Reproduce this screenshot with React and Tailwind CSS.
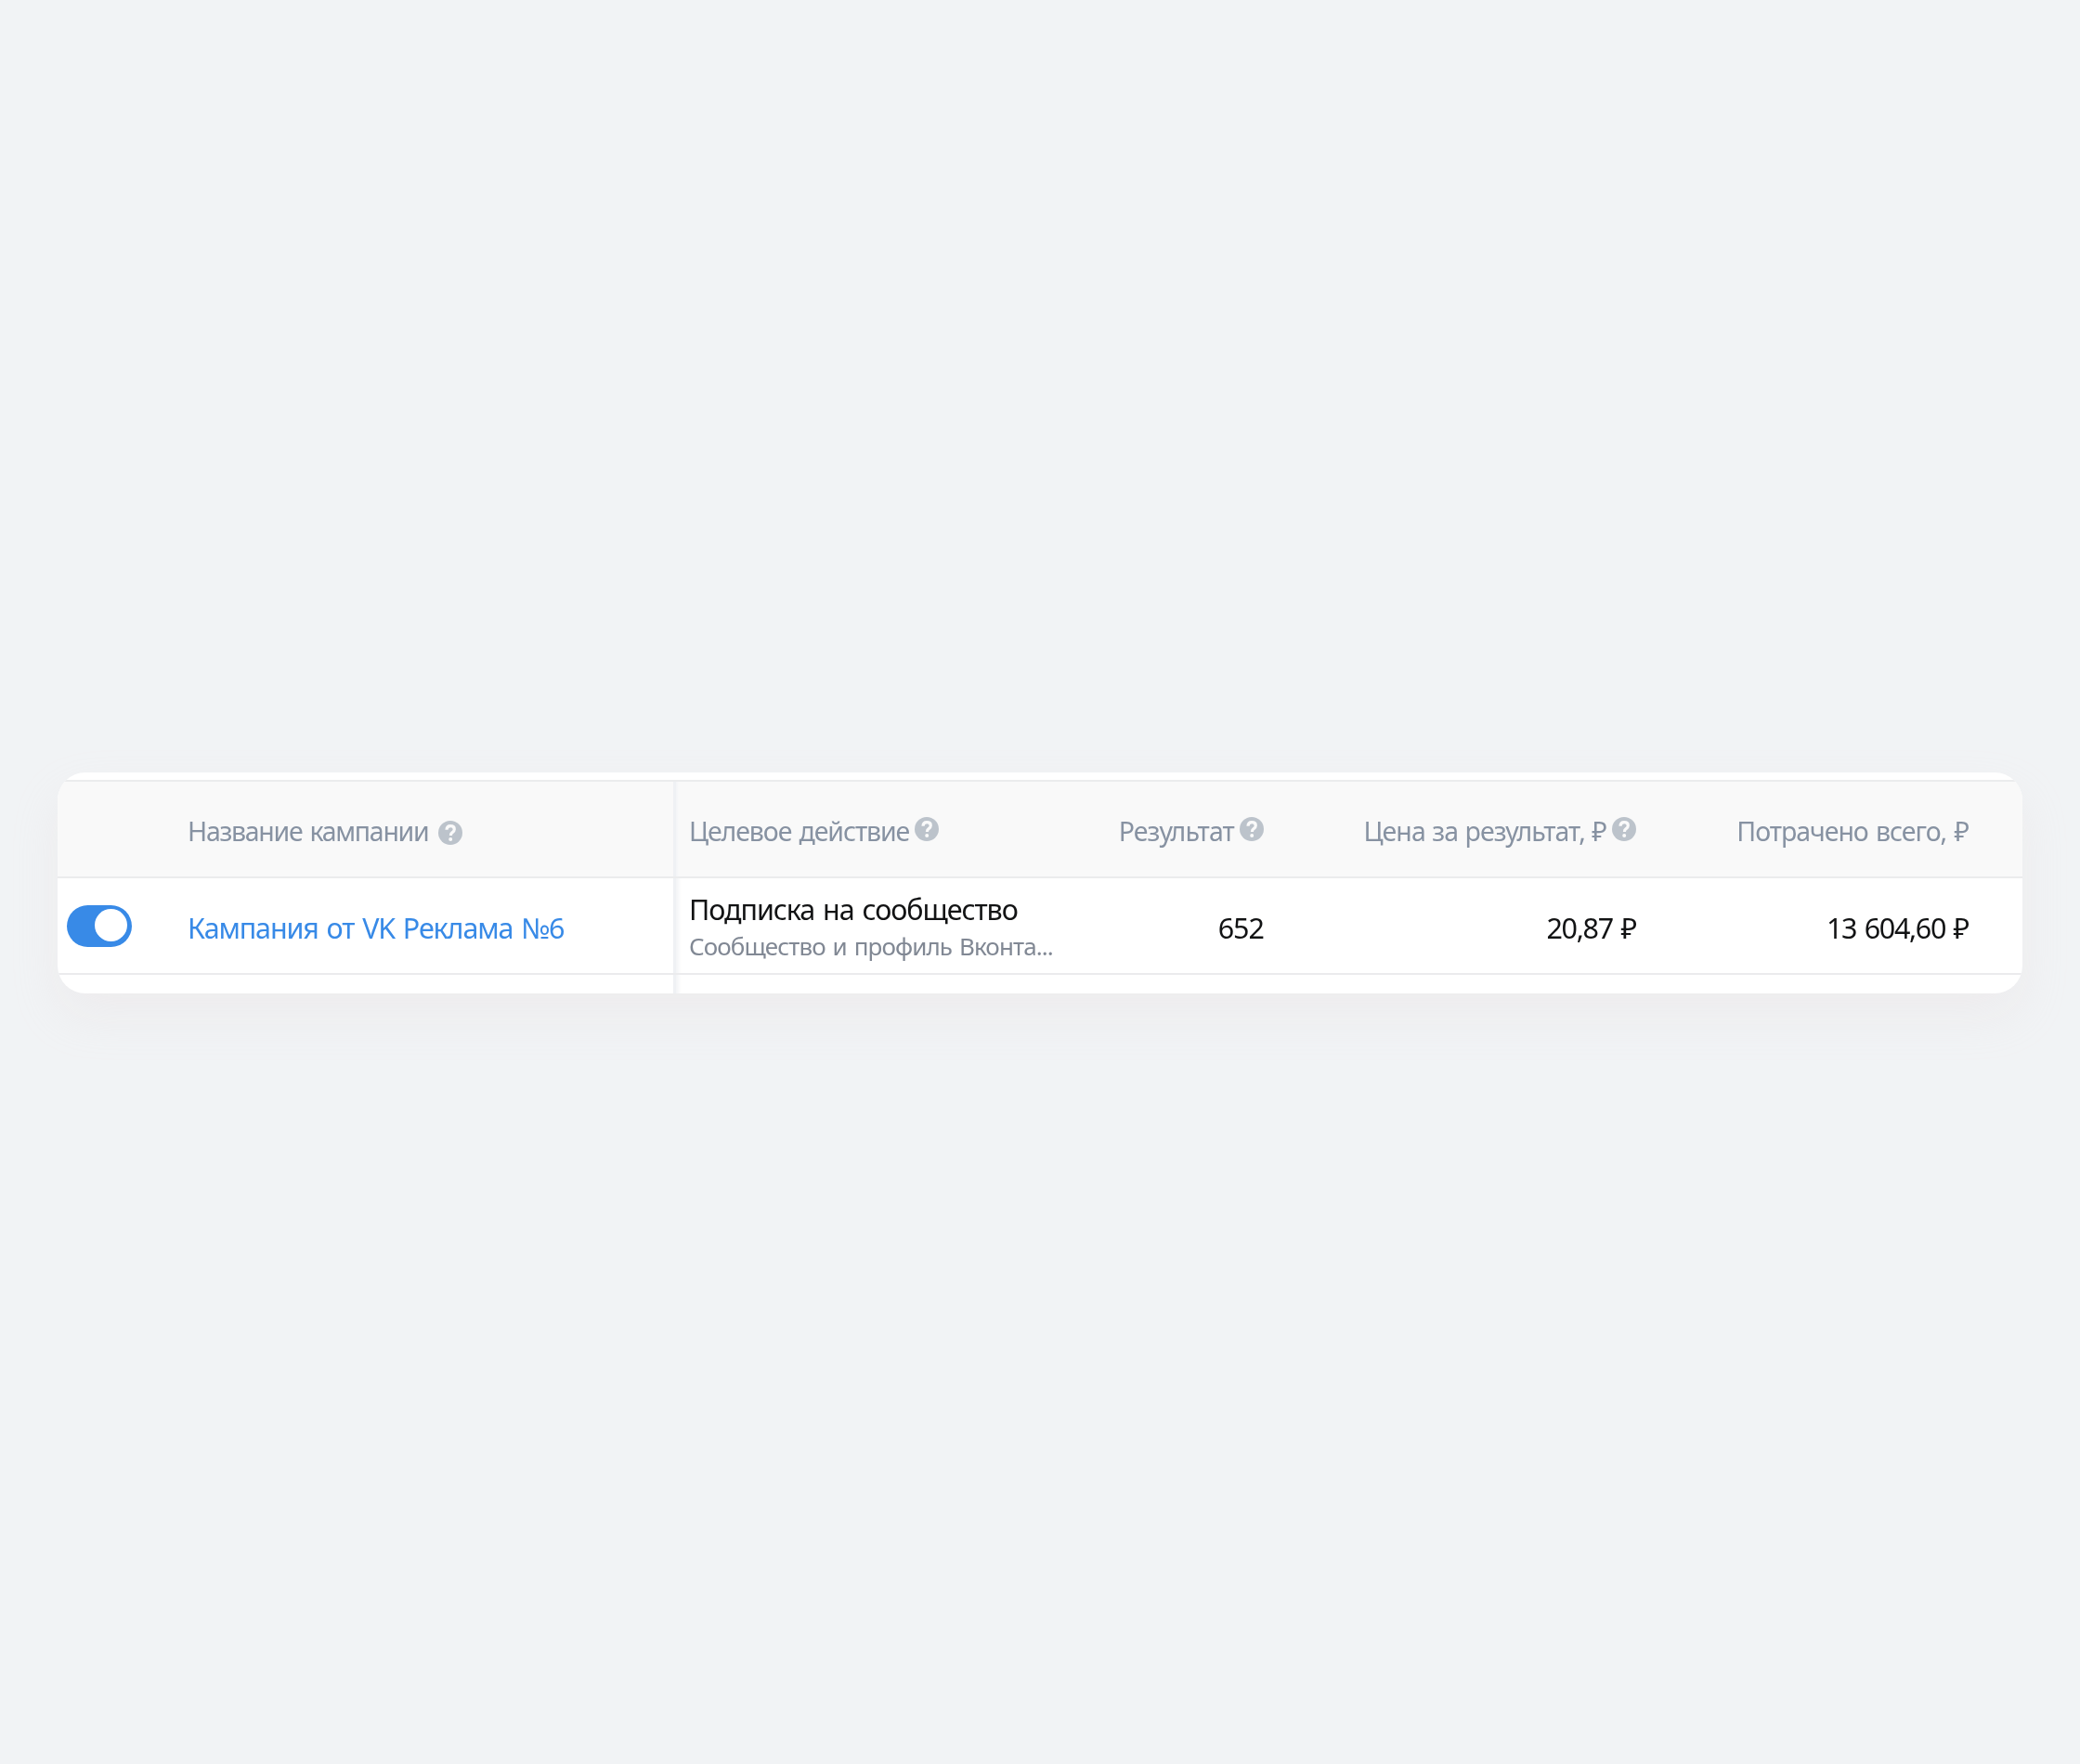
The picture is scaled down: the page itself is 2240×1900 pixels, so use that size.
import React from 'react';

const HelpIcon = ({ className = '' }) => (
  <svg viewBox="0 0 26 26" className={`size-[26px] shrink-0 ${className}`} fill="none">
    <circle cx="13" cy="13" r="13" fill="#bcc3cb" />
    <path
      d="M9 9.8C9.1 7.2 10.6 5.7 13.1 5.7c2.6 0 4.2 1.4 4.2 3.5 0 1.8-1 2.6-2.2 3.5-1.2.8-1.7 1.5-1.7 3.2"
      stroke="#fafafa"
      strokeWidth="3.2"
    />
    <circle cx="13.2" cy="20" r="2" fill="#fafafa" />
  </svg>
);

const Toggle = () => (
  <button
    type="button"
    role="switch"
    aria-checked="true"
    className="flex h-[45px] w-[70px] justify-end rounded-full bg-[#388ae7] pr-[5px] pt-1"
  >
    <span className="size-[35px] rounded-full bg-white" />
  </button>
);

const columns = 'grid grid-cols-[141px_522px_386px_250px_401px_358px_58px]';

const App = () => {
  return (
    <div className="flex h-[1900px] w-[2240px] items-start justify-center bg-[#f1f3f5] pt-[832px] font-['Noto_Sans',sans-serif] font-[370]">
      <div className="relative h-[238px] w-[2116px] overflow-hidden rounded-[30px] bg-white shadow-[0_24px_50px_rgba(225,208,208,0.2)]">
        <div className="h-2" />

        {/* Header */}
        <div className={`${columns} h-[106px] items-center whitespace-nowrap border-y-2 border-[#ebeced] bg-[#f9f9f9] text-[28.5px] text-[#8792a2]`}>
          <div />
          <div className="-ml-px flex items-center pt-1">
            <span className="tracking-[-1.3px] [word-spacing:2px]">Название кампании</span>
            <HelpIcon className="ml-[11px] mt-[3px]" />
          </div>
          <div className="flex items-center pl-[17px] pt-1">
            <span className="tracking-[-1.1px] [word-spacing:2px]">Целевое действие</span>
            <HelpIcon className="mb-[5px] ml-1.5" />
          </div>
          <div className="flex items-center justify-end pt-1">
            <span className="tracking-[-0.85px]">Результат</span>
            <HelpIcon className="mb-[5px] ml-1.5" />
          </div>
          <div className="flex items-center justify-end pt-1">
            <span className="tracking-[-0.95px] [word-spacing:1px]">Цена за результат, ₽</span>
            <HelpIcon className="mb-[5px] ml-1.5" />
          </div>
          <div className="pt-1 text-right tracking-[-1.05px] [word-spacing:2px]">Потрачено всего, ₽</div>
        </div>

        {/* Campaign row */}
        <div className={`${columns} h-[104px] items-center whitespace-nowrap border-b-2 border-[#ebebed] text-[30.5px] text-[#121314]`}>
          <div className="pl-2.5">
            <Toggle />
          </div>
          <a className="-ml-px pt-1.5 tracking-[-1.13px] text-[#388ae7] [word-spacing:2px]">Кампания от VK Реклама №6</a>
          <div className="flex flex-col pl-[17px] pt-1">
            <span className="leading-10 tracking-[-1.06px] [word-spacing:2px]">Подписка на сообщество</span>
            <span className="text-[26px] leading-10 tracking-[-0.9px] text-[#818894] [word-spacing:2px]">Сообщество и профиль Вконта...</span>
          </div>
          <div className="pt-1.5 text-right tracking-[-1px]">652</div>
          <div className="pt-1.5 text-right tracking-[-1.3px] [word-spacing:2px]">20,87 ₽</div>
          <div className="pt-1.5 text-right tracking-[-1.35px] [word-spacing:2px]">13 604,60 ₽</div>
        </div>

        {/* Edge of the pinned columns */}
        <div className="absolute bottom-0 left-[663px] top-2.5 flex mix-blend-darken">
          <div className="w-[3px] bg-[#eff1f4]" />
          <div className="w-1.5 bg-linear-to-r from-[#f3f4f6] to-white" />
        </div>
      </div>
    </div>
  );
};

export default App;
